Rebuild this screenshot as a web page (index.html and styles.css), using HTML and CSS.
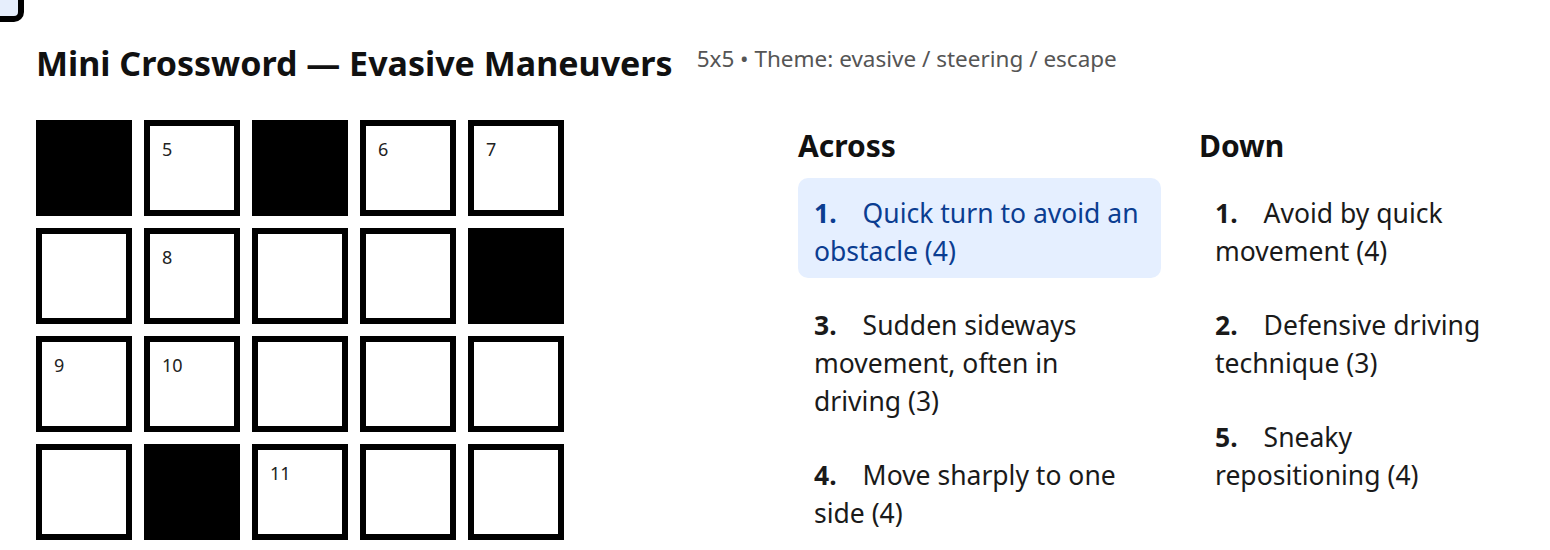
FILE: index.html
```html
<!DOCTYPE html>
<html lang="en">
<head>
    <meta charset="UTF-8">
    <meta name="viewport" content="width=device-width, initial-scale=1.0">
    <title>Mini Crossword — Evasive Maneuvers</title>
    <link rel="stylesheet" href="styles.css">
</head>
<body>

    <div class="focus-ghost"></div>

    <div class="page">
        <header>
            <h1>Mini Crossword — Evasive Maneuvers</h1>
            <span class="meta">5x5 • Theme: evasive / steering / escape</span>
        </header>

        <main>
            <div class="board-wrap">
                <div class="board">
                    <!-- Row 1 -->
                    <div class="cell block"></div>
                    <div class="cell"><span class="num">5</span></div>
                    <div class="cell block"></div>
                    <div class="cell"><span class="num">6</span></div>
                    <div class="cell"><span class="num">7</span></div>

                    <!-- Row 2 -->
                    <div class="cell"></div>
                    <div class="cell"><span class="num">8</span></div>
                    <div class="cell"></div>
                    <div class="cell"></div>
                    <div class="cell block"></div>

                    <!-- Row 3 -->
                    <div class="cell"><span class="num">9</span></div>
                    <div class="cell"><span class="num">10</span></div>
                    <div class="cell"></div>
                    <div class="cell"></div>
                    <div class="cell"></div>

                    <!-- Row 4 -->
                    <div class="cell"></div>
                    <div class="cell block"></div>
                    <div class="cell"><span class="num">11</span></div>
                    <div class="cell"></div>
                    <div class="cell"></div>

                    <!-- Row 5 -->
                    <div class="cell"></div>
                    <div class="cell"></div>
                    <div class="cell"></div>
                    <div class="cell block"></div>
                    <div class="cell"></div>
                </div>
            </div>

            <div class="clues">
                <section class="clue-col">
                    <h2>Across</h2>
                    <ol class="clue-list">
                        <li class="clue active"><span class="clue-num">1.</span><span class="clue-text">Quick turn to avoid an obstacle (4)</span></li>
                        <li class="clue"><span class="clue-num">3.</span><span class="clue-text">Sudden sideways movement, often in driving (3)</span></li>
                        <li class="clue"><span class="clue-num">4.</span><span class="clue-text">Move sharply to one side (4)</span></li>
                    </ol>
                </section>
                <section class="clue-col">
                    <h2>Down</h2>
                    <ol class="clue-list">
                        <li class="clue"><span class="clue-num">1.</span><span class="clue-text">Avoid by quick movement (4)</span></li>
                        <li class="clue"><span class="clue-num">2.</span><span class="clue-text">Defensive driving technique (3)</span></li>
                        <li class="clue"><span class="clue-num">5.</span><span class="clue-text">Sneaky repositioning (4)</span></li>
                    </ol>
                </section>
            </div>
        </main>
    </div>

</body>
</html>
```

FILE: styles.css
```css
body {
    font-family: 'Noto Sans', 'Open Sans', sans-serif;
    background-color: #fff;
    margin: 0;
    padding: 0;
    color: #111;
}

/* leftover focus box, mostly scrolled off the top-left corner */
.focus-ghost {
    position: absolute;
    left: -80px;
    top: -80px;
    width: 92px;
    height: 90px;
    background-color: #e6eefc;
    border: 6px solid #000;
    border-radius: 10px;
}

.page {
    padding: 40px 36px 0;
}

header {
    display: flex;
    align-items: flex-start;
    gap: 24px;
    margin-bottom: 34px;
}

header h1 {
    font-size: 34px;
    font-weight: 700;
    margin: 0;
    color: #111;
}

.meta {
    font-size: 22.5px;
    margin-top: 3px;
    color: #555;
}

main {
    display: flex;
    align-items: flex-start;
}

.board-wrap {
    flex: 0 0 762px;
}

.board {
    display: grid;
    grid-template-columns: repeat(5, 96px);
    grid-auto-rows: 96px;
    gap: 12px;
}

.cell {
    position: relative;
    box-sizing: border-box;
    border: 6px solid #000;
    background-color: #fff;
}

.cell.block {
    background-color: #000;
}

.num {
    position: absolute;
    top: 14px;
    left: 12px;
    font-size: 18px;
    line-height: 1;
    color: #222;
}

.clues {
    display: grid;
    grid-template-columns: 363px 315px;
    gap: 38px;
}

.clue-col h2 {
    font-size: 30px;
    font-weight: 700;
    margin: 8px 0 14px;
    line-height: 36px;
}

.clue-list {
    list-style: none;
    margin: 0;
    padding: 0;
    display: flex;
    flex-direction: column;
    gap: 12px;
}

.clue {
    font-size: 26.5px;
    line-height: 38px;
    padding: 16px 16px 8px;
    border-radius: 10px;
    color: #1a1a1a;
}

.clue.active {
    background-color: #e5efff;
    color: #0b3d91;
}

.clue-num {
    display: inline-block;
    font-weight: 700;
    margin-right: 26px;
}
```
